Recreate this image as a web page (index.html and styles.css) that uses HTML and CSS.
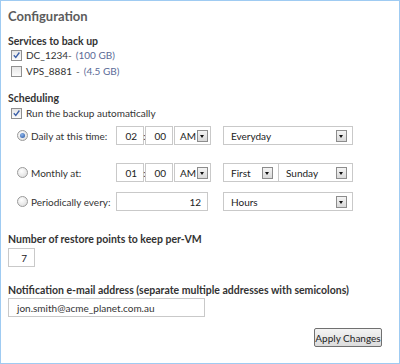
FILE: index.html
```html
<!DOCTYPE html>
<html>
<head>
<meta charset="utf-8">
<link rel="stylesheet" href="styles.css">
</head>
<body>
<div class="panel">
  <h1 class="title">Configuration</h1>

  <div class="label sec-services">Services to back up</div>
  <div class="check-row">
    <span class="cb checked"><svg viewBox="0 0 10 10" width="10" height="10"><path d="M2 5.2 L4.2 7.6 L8.2 2.2" fill="none" stroke="#3b5fa8" stroke-width="1.5"/></svg></span>
    <span class="name">DC_1234</span><span class="dash">-</span><span class="size">(100 GB)</span>
  </div>
  <div class="check-row">
    <span class="cb"></span>
    <span class="name">VPS_8881</span><span class="dash dash-wide">-</span><span class="size">(4.5 GB)</span>
  </div>

  <div class="label sec-sched">Scheduling</div>
  <div class="check-row run-row">
    <span class="cb checked"><svg viewBox="0 0 10 10" width="10" height="10"><path d="M2 5.2 L4.2 7.6 L8.2 2.2" fill="none" stroke="#3b5fa8" stroke-width="1.5"/></svg></span>
    <span class="name">Run the backup automatically</span>
  </div>

  <div class="sched-row row-daily">
    <span class="radio on"><span class="dot"></span></span>
    <span class="rlabel">Daily at this time:</span>
    <div class="fields">
      <span class="tbox num">02</span><span class="colon">:</span><span class="tbox num">00</span>
      <span class="sel sel-ampm"><span class="sel-text">AM</span><span class="arrow"></span></span>
    </div>
    <span class="sel sel-wide"><span class="sel-text">Everyday</span><span class="arrow"></span></span>
  </div>

  <div class="sched-row row-monthly">
    <span class="radio"></span>
    <span class="rlabel">Monthly at:</span>
    <div class="fields">
      <span class="tbox num">01</span><span class="colon">:</span><span class="tbox num">00</span>
      <span class="sel sel-ampm"><span class="sel-text">AM</span><span class="arrow"></span></span>
    </div>
    <span class="sel sel-first"><span class="sel-text">First</span><span class="arrow"></span></span><span class="sel sel-day"><span class="sel-text">Sunday</span><span class="arrow"></span></span>
  </div>

  <div class="sched-row row-period">
    <span class="radio"></span>
    <span class="rlabel">Periodically every:</span>
    <div class="fields">
      <span class="tbox num tbox-long">12</span>
    </div>
    <span class="sel sel-wide"><span class="sel-text">Hours</span><span class="arrow"></span></span>
  </div>

  <div class="label sec-restore">Number of restore points to keep per-VM</div>
  <span class="tbox num tbox-small">7</span>

  <div class="label sec-notify">Notification e-mail address (separate multiple addresses with semicolons)</div>
  <span class="tbox tbox-email">jon.smith@acme_planet.com.au</span>

  <div class="actions">
    <button class="btn">Apply Changes</button>
  </div>
</div>
</body>
</html>
```

FILE: styles.css
```css
html, body {
  margin: 0;
  padding: 0;
  background: #ffffff;
}

.panel {
  width: 400px;
  height: 364px;
  box-sizing: border-box;
  border: 1px solid #9fcbf2;
  padding: 0 7px;
  font-family: Lato, "Liberation Sans", sans-serif;
  font-size: 10px;
  color: #3a3a3a;
  display: flex;
  flex-direction: column;
  align-items: flex-start;
  white-space: nowrap;
}

.title {
  margin: 6px 0 0 0;
  font-size: 13px;
  line-height: 18px;
  font-weight: bold;
  color: #5c5c5c;
}

.label {
  font-weight: bold;
  font-size: 10.5px;
  line-height: 12px;
  color: #333333;
}

.sec-services { margin-top: 10px; }
.sec-sched { margin-top: 13px; }
.sec-restore { margin-top: 22px; }
.sec-notify { margin-top: 17px; }

.check-row {
  display: flex;
  align-items: center;
  height: 16px;
  padding-left: 3px;
  gap: 4px;
  color: #333;
}

.run-row { margin-top: 1px; }

.cb {
  width: 9px;
  height: 9px;
  border: 1px solid #8f8f8f;
  background: linear-gradient(#e6e6e6, #fbfbfb);
  display: flex;
  align-items: center;
  justify-content: center;
  flex: none;
}

.cb svg { display: block; }

.dash {
  margin-left: -4px;
  margin-right: 0;
  color: #555;
}

.dash-wide { margin-left: 0; }

.size {
  color: #5a6a96;
}

.sched-row {
  display: flex;
  align-items: center;
  height: 19px;
  padding-left: 9px;
  width: 100%;
}

.row-daily { margin-top: 5px; }
.row-monthly { margin-top: 18px; }
.row-period { margin-top: 10px; }

.radio {
  width: 9px;
  height: 9px;
  border-radius: 50%;
  border: 1px solid #9a9a9a;
  background: radial-gradient(circle at 40% 35%, #ffffff, #d8d8d8);
  display: flex;
  align-items: center;
  justify-content: center;
  flex: none;
}

.radio .dot {
  width: 5px;
  height: 5px;
  border-radius: 50%;
  background: radial-gradient(circle at 40% 35%, #8fb6ea, #1f4fa0);
}

.rlabel {
  margin-left: 3px;
  width: 85px;
  color: #333;
}

.fields {
  display: flex;
  align-items: center;
  width: 107px;
}

.tbox {
  box-sizing: border-box;
  height: 19px;
  border: 1px solid #c9c9c9;
  display: inline-flex;
  align-items: center;
  padding: 0 6px;
  color: #222;
  background: #fff;
}

.num { justify-content: flex-end; }

.fields .tbox { width: 28px; }
.fields .tbox-long { width: 92px; }

.colon {
  width: 1px;
  display: inline-flex;
  justify-content: center;
  overflow: visible;
  color: #333;
}

.sel {
  box-sizing: border-box;
  height: 19px;
  border: 1px solid #c9c9c9;
  display: inline-flex;
  align-items: center;
  justify-content: space-between;
  padding: 0 5px 0 7px;
  color: #222;
  background: #fff;
}

.sel-ampm {
  width: 37px;
  margin-left: 1px;
  padding: 0 2px 0 5px;
}

.sel-wide { width: 130px; }
.sel-first { width: 56px; }
.sel-day { width: 75px; margin-left: -1px; }

.arrow {
  width: 9px;
  height: 10px;
  border: 1px solid #8c8c8c;
  background: linear-gradient(#f4f4f4, #d9d9d9);
  position: relative;
  flex: none;
}

.arrow::after {
  content: "";
  position: absolute;
  left: 2px;
  top: 4px;
  border-left: 2.5px solid transparent;
  border-right: 2.5px solid transparent;
  border-top: 3px solid #111;
}

.tbox-small {
  margin-top: 3px;
  width: 27px;
  padding-right: 7px;
}

.tbox-email {
  margin-top: 2px;
  width: 197px;
  padding-left: 8px;
  color: #333;
}

.actions {
  width: 100%;
  display: flex;
  justify-content: flex-end;
  margin-top: 11px;
}

.btn {
  margin-right: 10px;
  height: 19px;
  width: 68px;
  box-sizing: border-box;
  padding: 0;
  font-family: Lato, "Liberation Sans", sans-serif;
  font-size: 10px;
  white-space: nowrap;
  color: #222;
  border: 1px solid #707070;
  border-radius: 2px;
  background: linear-gradient(#f3f3f3, #dcdcdc);
}
```
